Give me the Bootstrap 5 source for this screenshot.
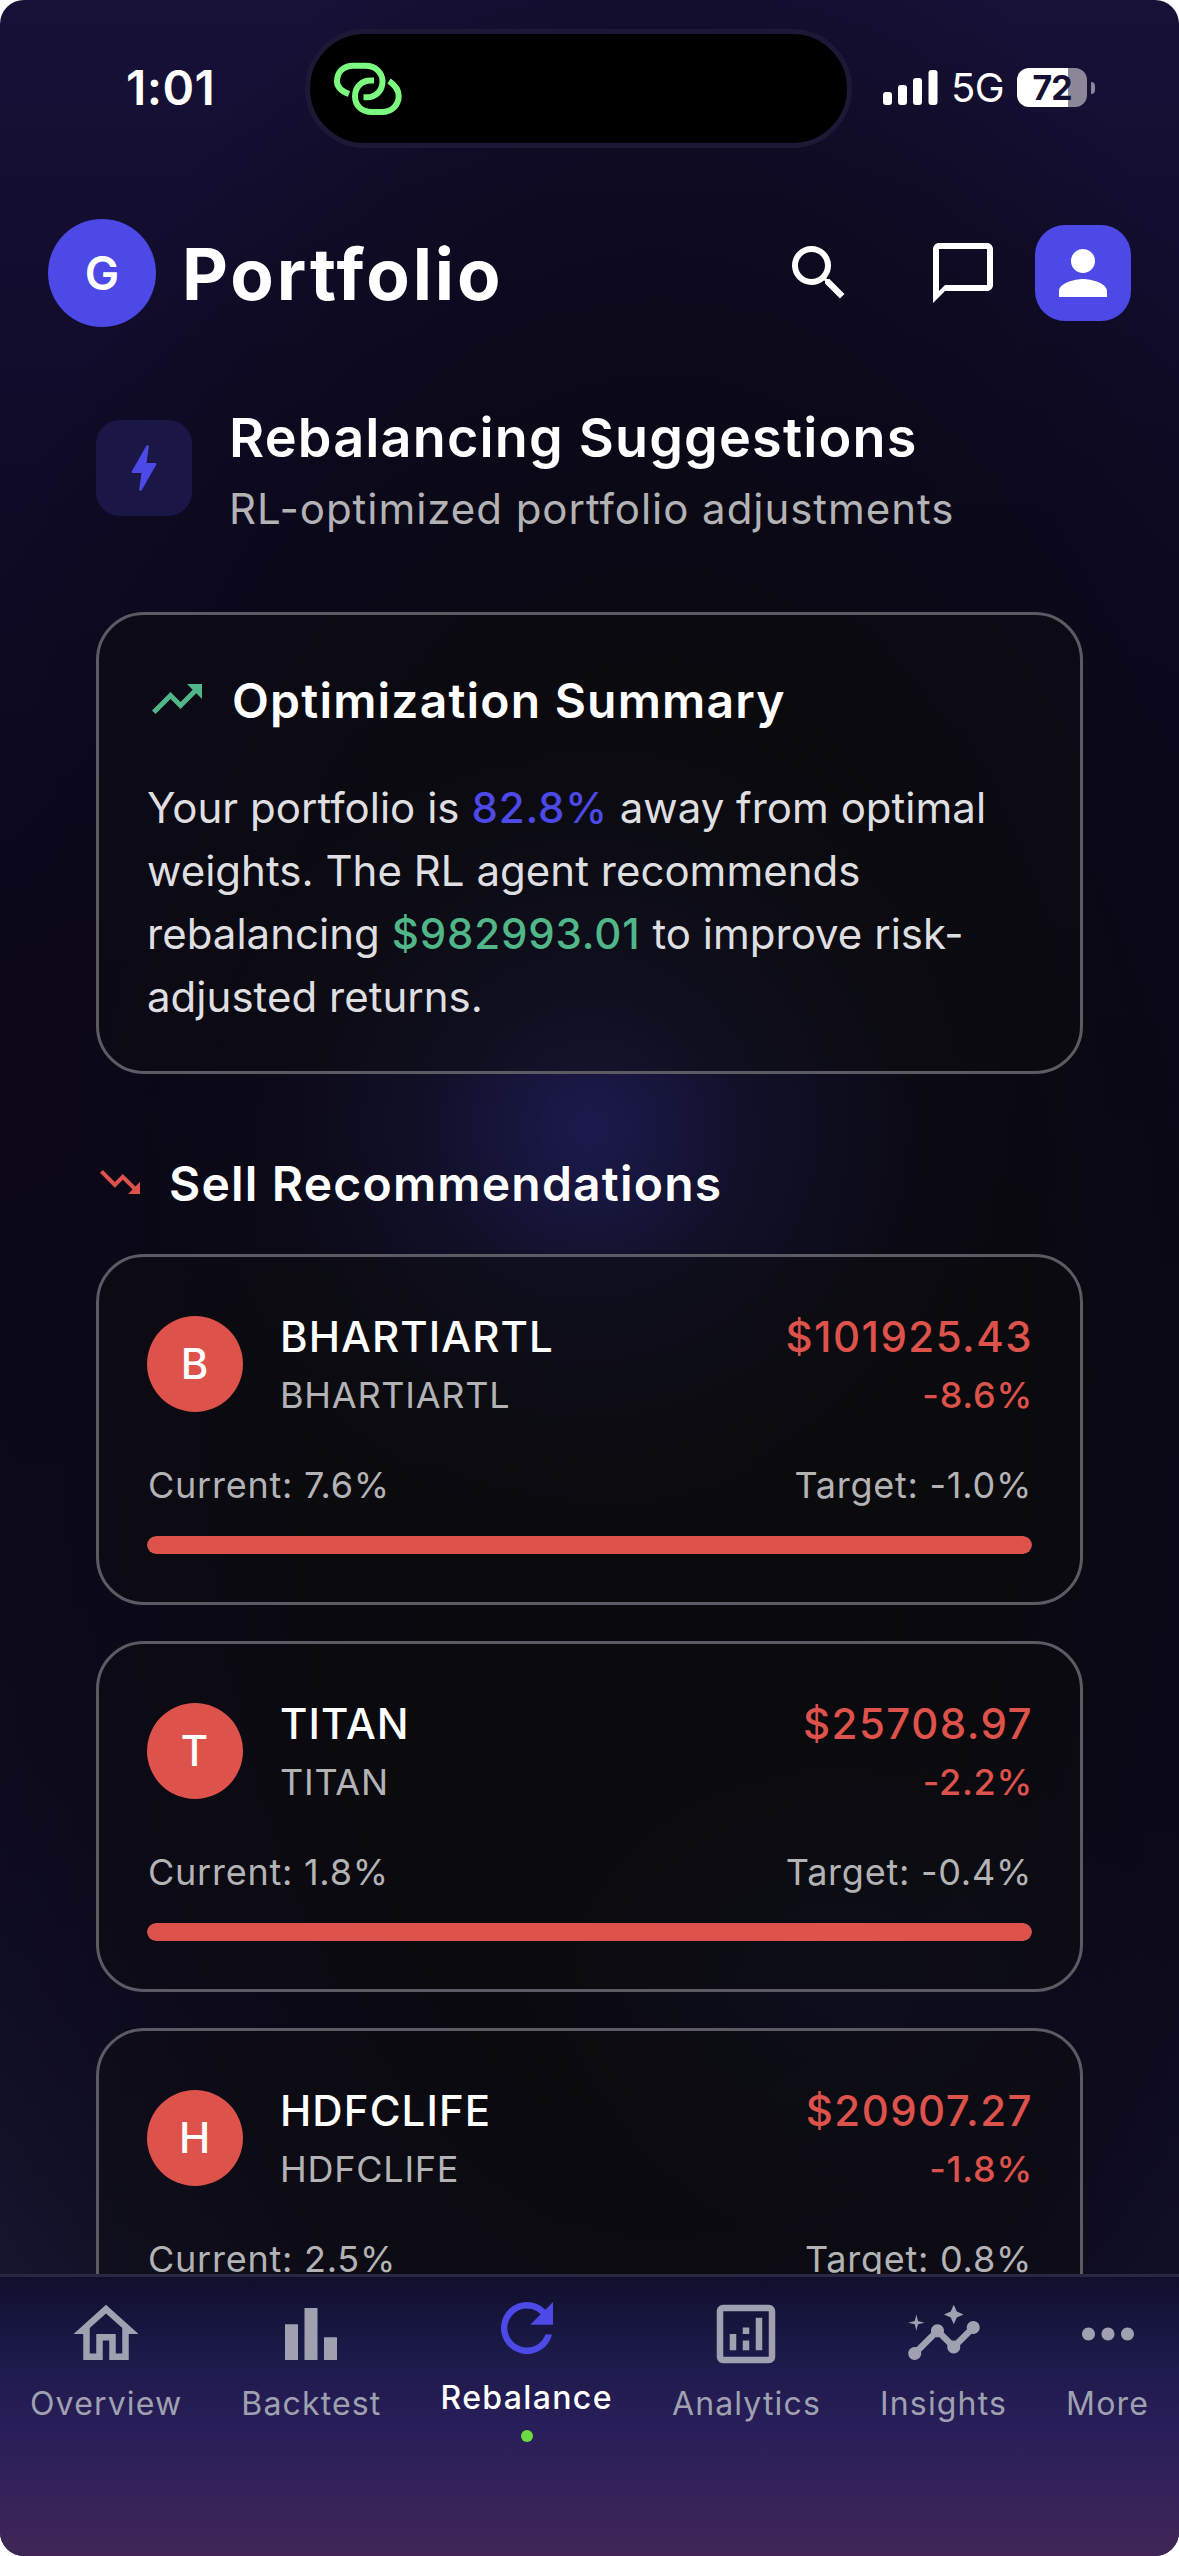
<!DOCTYPE html>
<html lang="en">
<head>
<meta charset="utf-8">
<title>Portfolio</title>
<meta name="viewport" content="width=device-width, initial-scale=1">
<link href="https://cdn.jsdelivr.net/npm/bootstrap@5.3.0/dist/css/bootstrap.min.css" rel="stylesheet">
<style>
html,body{height:100%;background:#fff}
body{font-family:Inter,"Liberation Sans",sans-serif;color:#fff;overflow:hidden;font-size:42px;font-weight:370;line-height:1.5;letter-spacing:.95px}
.screen{width:1179px;height:2556px;border-radius:24px;overflow:hidden;
background:
radial-gradient(circle 440px at 590px 1128px,rgba(38,35,112,.66),rgba(28,26,82,.4) 36%,rgba(20,18,60,.14) 72%,transparent),
radial-gradient(ellipse 330px 260px at 840px 1980px,rgba(20,24,60,.3),transparent),
radial-gradient(ellipse 780px 1560px at 660px 1400px,#0a0a0c 0,#0a090f 45%,rgba(11,8,24,.72) 74%,transparent),
linear-gradient(180deg,#171138 0,#0f0b28 18%,#0c0718 42%,#0e0c20 70%,#16152f 90%)}
.status{height:180px;flex:none;padding-left:126px}
.clock{width:179px;font-size:48px;font-weight:600;letter-spacing:.4px;line-height:60px;padding-top:58px}
.island{width:547px;height:119px;margin-top:29px;border:5px solid #1d1836;border-radius:60px;background:#000;padding-left:22px}
.sig{margin-top:68px;margin-left:31px;height:39px;gap:13px;letter-spacing:0}
.net{font-size:40px;line-height:39px;font-weight:420;letter-spacing:-.5px}
.batt{width:70px;height:39px;border-radius:12px;background:linear-gradient(90deg,#fff 51px,#8b8798 51px);color:#161035;font-size:34px;font-weight:700;line-height:39px;letter-spacing:-1px;margin-right:4px}
.nub{width:4px;height:12px;border-radius:0 6px 6px 0;background:#8b8798}
.topbar{height:108px;margin-top:39px;padding:0 48px;flex:none}
.me{width:108px;height:108px;background:#4c49e6;font-size:46px;font-weight:600;letter-spacing:0}
.apptitle{font-size:71px;font-weight:650;line-height:1;margin-left:26px;letter-spacing:2.9px;padding-top:2px}
.ic72{width:72px;height:72px;fill:currentColor}
.ic-search{margin-right:72px}
.ic-chat{margin-right:36px}
.userbtn{width:96px;height:96px;border-radius:30px;background:#4c49e6}
.main{flex:1;min-height:0;overflow:hidden;padding:69px 96px 0}
.gap-after{margin-bottom:72px}
.gap-after-sm{margin-bottom:36px}
.bolt{width:96px;height:96px;border-radius:24px;background:#1a1645;color:#4c49e6}
.texts{margin-left:37px}
.h-big{font-size:54px;font-weight:560;line-height:78px;padding-top:3px;letter-spacing:1.15px}
.sub{color:#b3b3b6;line-height:63px}
.h-mid{font-size:48px;font-weight:560;line-height:69px;padding-top:3px;margin-left:25px;letter-spacing:1.2px}
.glass{border:3px solid #5c5b64;border-radius:48px;background:rgba(14,14,16,.45);padding:48px}
.para{color:#dfdfe1;padding-top:5px;margin-bottom:-5px;letter-spacing:.02px}
.para span{font-weight:550;letter-spacing:.85px}
.up{color:#52b788}.down{color:#dd524b}.brand{color:#4c49e6}
.coin{width:96px;height:96px;background:#dd524b;font-weight:550}
.ticker{font-weight:550;letter-spacing:1.1px}
.amount{font-weight:550;letter-spacing:1.45px;margin-right:-1px}
.small36{font-size:36px;line-height:54px;letter-spacing:.75px}
.delta{font-weight:450;margin-right:-1px}
.dim{color:#b3b3b6}
.weights{margin:36px 0 24px;padding-left:1px}
.rail{height:18px;border-radius:9px;background:#2a2a2e}
.rail .progress-bar{background:#dd524b;border-radius:9px}
.tabs{height:282px;flex:none;border-top:3px solid #2a2745;padding:18px 30px 0;background:linear-gradient(180deg,#100f2d 0,#1c1a4a 28%,#281e58 53%,#35235a 79%,#402656 100%)}
.tab{color:#9fa1b0;font-size:32px;line-height:50px;letter-spacing:1.15px}
.tab svg{width:78px;height:78px;fill:currentColor;display:block}
.tab.on{color:#fff;font-weight:500;margin-top:-6px;letter-spacing:1.35px}
.tab.on svg{color:#4c49e6}
.tab span{margin-top:6px}
.dot{width:12px;height:12px;background:#6cdb41;margin-top:7px}
</style>
<script src="https://cdn.jsdelivr.net/npm/bootstrap@5.3.0/dist/js/bootstrap.bundle.min.js"></script>
</head>
<body>
<div class="screen d-flex flex-column">
  <div class="status d-flex align-items-start">
    <div class="clock">1:01</div>
    <div class="island d-flex align-items-center">
      <svg width="70" height="56" viewBox="0 0 70 56" fill="none" stroke="#7dfb80" stroke-width="6">
        <path d="M17 33C9 30 5 26 5 20.500C5 11.500 11 4.700 21.500 4.700h12c10 0 17 7 17 15.800 0 9-6.500 15.800-16 15.800h-3"/>
        <path d="M42 19.500h-3c-10 0-16 7-16 15.700C23 44 29 51 40 51h10c10 0 16.700-7 16.700-16C66.700 29 63 24 57 20"/>
      </svg>
    </div>
    <div class="sig d-flex align-items-center">
      <svg width="55" height="35" fill="#fff"><rect y="22" width="9" height="13" rx="3"/><rect x="15" y="15" width="9" height="20" rx="3"/><rect x="30" y="8" width="9" height="27" rx="3"/><rect x="45.500" width="9" height="35" rx="3"/></svg>
      <div class="net">5G</div>
      <div class="d-flex align-items-center"><div class="batt text-center">72</div><div class="nub"></div></div>
    </div>
  </div>

  <header class="topbar d-flex align-items-center">
    <div class="me rounded-circle d-flex align-items-center justify-content-center">G</div>
    <div class="apptitle me-auto">Portfolio</div>
    <svg class="ic72 ic-search" viewBox="0 0 24 24"><path d="M15.500 14h-.79l-.28-.27A6.471 6.471 0 0 0 16 9.500 6.500 6.500 0 1 0 9.500 16c1.610 0 3.090-.59 4.230-1.570l.27.28v.79l5 4.990L20.490 19l-4.990-5zm-6 0C7.010 14 5 11.990 5 9.500S7.010 5 9.500 5 14 7.010 14 9.500 11.990 14 9.500 14z"/></svg>
    <svg class="ic72 ic-chat" viewBox="0 0 24 24"><path d="M20 2H4c-1.100 0-2 .9-2 2v18l4-4h14c1.100 0 2-.9 2-2V4c0-1.100-.9-2-2-2zm0 14H6l-2 2V4h16v12z"/></svg>
    <div class="userbtn d-flex align-items-center justify-content-center"><svg class="ic72" viewBox="0 0 24 24"><path d="M12 12c2.210 0 4-1.790 4-4s-1.790-4-4-4-4 1.790-4 4 1.790 4 4 4zm0 2c-2.670 0-8 1.340-8 4v2h16v-2c0-2.660-5.330-4-8-4z"/></svg></div>
  </header>

  <main class="main">
    <div class="gap-after d-flex align-items-center">
      <div class="bolt d-flex align-items-center justify-content-center"><svg width="60" height="60" viewBox="0 0 24 24" fill="currentColor"><path d="M11 21h-1l1-7H7.500c-.58 0-.57-.32-.38-.66.190-.34.050-.08.070-.12C8.480 10.940 10.420 7.540 13 3h1l-1 7h3.500c.49 0 .56.330.470.510l-.07.150C12.960 17.550 11 21 11 21z"/></svg></div>
      <div class="texts"><div class="h-big">Rebalancing Suggestions</div><div class="sub">RL-optimized portfolio adjustments</div></div>
    </div>

    <section class="glass gap-after">
      <div class="gap-after-sm d-flex align-items-center">
        <svg class="up" width="60" height="60" viewBox="0 0 24 24" fill="currentColor"><path d="M16 6l2.290 2.290-4.880 4.880-4-4L2 16.590 3.410 18l6-6 4 4 6.300-6.290L22 12V6z"/></svg>
        <div class="h-mid">Optimization Summary</div>
      </div>
      <div class="para">Your portfolio is <span class="brand">82.8%</span> away from optimal<br>weights. The RL agent recommends<br>rebalancing <span class="up">$982993.01</span> to improve risk-<br>adjusted returns.</div>
    </section>

    <div class="gap-after-sm d-flex align-items-center">
      <svg class="down" width="48" height="48" viewBox="0 0 24 24" fill="currentColor"><path d="M16 18l2.290-2.290-4.880-4.880-4 4L2 7.410 3.410 6l6 6 4-4 6.300 6.290L22 12v6z"/></svg>
      <div class="h-mid">Sell Recommendations</div>
    </div>

    <div class="d-flex flex-column" style="gap:36px">
      <article class="glass">
        <div class="d-flex align-items-center">
          <div class="coin rounded-circle d-flex align-items-center justify-content-center">B</div>
          <div class="texts me-auto"><div class="ticker">BHARTIARTL</div><div class="small36 dim">BHARTIARTL</div></div>
          <div class="text-end down"><div class="amount">$101925.43</div><div class="small36 delta">-8.6%</div></div>
        </div>
        <div class="weights d-flex justify-content-between small36 dim"><span>Current: 7.6%</span><span>Target: -1.0%</span></div>
        <div class="progress rail"><div class="progress-bar" style="width:100%"></div></div>
      </article>
      <article class="glass">
        <div class="d-flex align-items-center">
          <div class="coin rounded-circle d-flex align-items-center justify-content-center">T</div>
          <div class="texts me-auto"><div class="ticker">TITAN</div><div class="small36 dim">TITAN</div></div>
          <div class="text-end down"><div class="amount">$25708.97</div><div class="small36 delta">-2.2%</div></div>
        </div>
        <div class="weights d-flex justify-content-between small36 dim"><span>Current: 1.8%</span><span>Target: -0.4%</span></div>
        <div class="progress rail"><div class="progress-bar" style="width:100%"></div></div>
      </article>
      <article class="glass">
        <div class="d-flex align-items-center">
          <div class="coin rounded-circle d-flex align-items-center justify-content-center">H</div>
          <div class="texts me-auto"><div class="ticker">HDFCLIFE</div><div class="small36 dim">HDFCLIFE</div></div>
          <div class="text-end down"><div class="amount">$20907.27</div><div class="small36 delta">-1.8%</div></div>
        </div>
        <div class="weights d-flex justify-content-between small36 dim"><span>Current: 2.5%</span><span>Target: 0.8%</span></div>
        <div class="progress rail"><div class="progress-bar" style="width:100%"></div></div>
      </article>
    </div>
  </main>

  <nav class="tabs d-flex justify-content-between align-items-start">
    <div class="tab d-flex flex-column align-items-center"><svg viewBox="0 0 24 24"><path d="M12 5.690l5 4.500V18h-2v-6H9v6H7v-7.810l5-4.500M12 3L2 12h3v8h6v-6h2v6h6v-8h3L12 3z"/></svg><span>Overview</span></div>
    <div class="tab d-flex flex-column align-items-center"><svg viewBox="0 0 24 24"><path d="M4 9h4v11H4zm12 4h4v7h-4zm-6-9h4v16h-4z"/></svg><span>Backtest</span></div>
    <div class="tab on d-flex flex-column align-items-center"><svg viewBox="0 0 24 24"><path d="M17.650 6.350A7.958 7.958 0 0 0 12 4a8 8 0 1 0 7.730 10h-2.080A5.990 5.990 0 0 1 12 18a6 6 0 1 1 4.220-10.220L13 11h7V4l-2.350 2.350z"/></svg><span>Rebalance</span><div class="dot rounded-circle"></div></div>
    <div class="tab d-flex flex-column align-items-center"><svg viewBox="0 0 24 24"><path d="M19 3H5c-1.100 0-2 .9-2 2v14c0 1.100.9 2 2 2h14c1.100 0 2-.9 2-2V5c0-1.100-.9-2-2-2zm0 16H5V5h14v14zM7 12h2v5H7zm8-5h2v10h-2zm-4 7h2v3h-2zm0-4h2v2h-2z"/></svg><span>Analytics</span></div>
    <div class="tab d-flex flex-column align-items-center"><svg viewBox="0 0 24 24"><path d="M21 8c-1.450 0-2.260 1.440-1.930 2.510l-3.550 3.560c-.3-.09-.74-.09-1.040 0l-2.550-2.550C12.270 10.450 11.460 9 10 9c-1.450 0-2.270 1.440-1.930 2.520l-4.560 4.550C2.440 15.740 1 16.550 1 18c0 1.100.9 2 2 2 1.450 0 2.260-1.440 1.930-2.510l4.550-4.560c.3.090.74.090 1.040 0l2.550 2.550C12.730 16.550 13.540 18 15 18c1.450 0 2.270-1.440 1.930-2.520l3.560-3.550C21.560 12.260 23 11.450 23 10c0-1.100-.9-2-2-2zM15 9l.94-2.070L18 6l-2.060-.93L15 3l-.92 2.070L12 6l2.080.93zM3.500 11L4 9l2-.5L4 8l-.5-2L3 8l-2 .5L3 9z"/></svg><span>Insights</span></div>
    <div class="tab d-flex flex-column align-items-center"><svg viewBox="0 0 24 24"><path d="M6 10c-1.100 0-2 .9-2 2s.9 2 2 2 2-.9 2-2-.9-2-2-2zm12 0c-1.100 0-2 .9-2 2s.9 2 2 2 2-.9 2-2-.9-2-2-2zm-6 0c-1.100 0-2 .9-2 2s.9 2 2 2 2-.9 2-2-.9-2-2-2z"/></svg><span>More</span></div>
  </nav>
</div>
</body>
</html>
